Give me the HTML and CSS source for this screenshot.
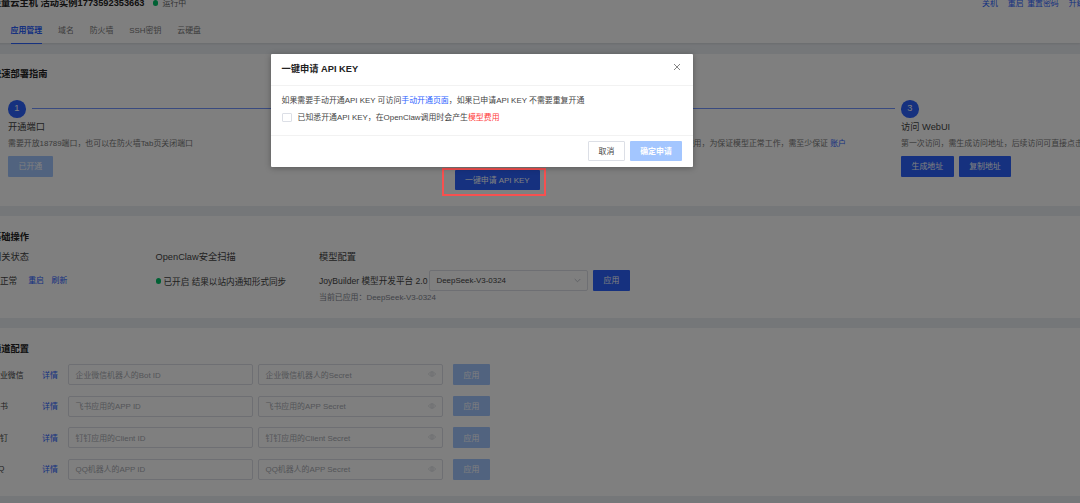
FILE: index.html
```html
<!DOCTYPE html>
<html lang="zh-CN">
<head>
	<meta charset="UTF-8">
	<title>应用管理</title>
	<link rel="stylesheet" href="styles.css">
</head>
<body>
	<div class="page">
		<div class="header">
			<div class="top">
				<h1>轻量云主机 活动实例1773592353663</h1>
				<span class="dot"></span>
				<span class="state">运行中</span>
				<div class="actions">
					<a>关机</a><a>重启</a><a>重置密码</a><a>升级配置</a>
				</div>
			</div>
			<ul class="tabs">
				<li class="on">应用管理</li>
				<li>域名</li>
				<li>防火墙</li>
				<li>SSH密钥</li>
				<li>云硬盘</li>
			</ul>
		</div>

		<div class="card guide">
			<h2>快速部署指南</h2>
			<div class="steps">
				<div class="step">
					<div class="num"><i>1</i><b></b></div>
					<h3>开通端口</h3>
					<p>需要开放18789端口，也可以在防火墙Tab页关闭端口</p>
					<div class="btns"><span class="btn disabled">已开通</span></div>
				</div>
				<div class="step">
					<div class="num"><i>2</i><b></b></div>
					<h3>配置模型</h3>
					<p class="model">一键申请后会自动开通模型服务并配置到当前的实例中，开通后即可使用，为保证模型正常工作，需至少保证 <a>账户</a><br>余额充足</p>
					<div class="btns"><span class="btn">一键申请 API KEY</span></div>
				</div>
				<div class="step">
					<div class="num"><i>3</i></div>
					<h3>访问 WebUI</h3>
					<p>第一次访问，需生成访问地址，后续访问可直接点击复制地址</p>
					<div class="btns"><span class="btn">生成地址</span><span class="btn">复制地址</span></div>
				</div>
			</div>
		</div>

		<div class="card basic">
			<h2>基础操作</h2>
			<div class="cols">
				<div class="col">
					<h3>网关状态</h3>
					<div class="line">正常<a class="first">重启</a><a>刷新</a></div>
				</div>
				<div class="col">
					<h3>OpenClaw安全扫描</h3>
					<div class="line scan"><span class="dot"></span>已开启 结果以站内通知形式同步</div>
				</div>
				<div class="col">
					<h3>模型配置</h3>
					<div class="line">
						<span class="platform">JoyBuilder 模型开发平台 2.0</span>
						<div class="select">DeepSeek-V3-0324
							<svg width="7" height="5" viewBox="0 0 7 5"><path d="M.7 1l2.8 2.8L6.3 1" fill="none" stroke="#b4b8c0" stroke-width=".8"/></svg>
						</div>
						<span class="btn">应用</span>
					</div>
					<div class="tip">当前已应用：DeepSeek-V3-0324</div>
				</div>
			</div>
		</div>

		<div class="card channel">
			<h2>通道配置</h2>
			<div class="row">
				<label>企业微信</label><a>详情</a>
				<div class="input">企业微信机器人的Bot ID</div>
				<div class="input">企业微信机器人的Secret<svg class="eye" viewBox="0 0 8 6"><path d="M.4 3Q4-1.8 7.6 3 4 7.8.4 3z"/><circle cx="4" cy="3" r="1.3"/></svg></div>
				<span class="btn disabled">应用</span>
			</div>
			<div class="row">
				<label>飞书</label><a>详情</a>
				<div class="input">飞书应用的APP ID</div>
				<div class="input">飞书应用的APP Secret<svg class="eye" viewBox="0 0 8 6"><path d="M.4 3Q4-1.8 7.6 3 4 7.8.4 3z"/><circle cx="4" cy="3" r="1.3"/></svg></div>
				<span class="btn disabled">应用</span>
			</div>
			<div class="row">
				<label>钉钉</label><a>详情</a>
				<div class="input">钉钉应用的Client ID</div>
				<div class="input">钉钉应用的Client Secret<svg class="eye" viewBox="0 0 8 6"><path d="M.4 3Q4-1.8 7.6 3 4 7.8.4 3z"/><circle cx="4" cy="3" r="1.3"/></svg></div>
				<span class="btn disabled">应用</span>
			</div>
			<div class="row">
				<label>QQ</label><a>详情</a>
				<div class="input">QQ机器人的APP ID</div>
				<div class="input">QQ机器人的APP Secret<svg class="eye" viewBox="0 0 8 6"><path d="M.4 3Q4-1.8 7.6 3 4 7.8.4 3z"/><circle cx="4" cy="3" r="1.3"/></svg></div>
				<span class="btn disabled">应用</span>
			</div>
		</div>
	</div>

	<div class="mask"></div>
	<div class="mark"></div>
	<div class="dialog">
		<div class="dialog-head">
			<h2>一键申请 API KEY</h2>
			<svg width="8" height="8" viewBox="0 0 8 8"><path d="M1 1l6 6M7 1L1 7" stroke="#666" stroke-width=".8"/></svg>
		</div>
		<div class="dialog-body">
			<p>如果需要手动开通API KEY 可访问<a>手动开通页面</a>，如果已申请API KEY 不需要重复开通</p>
			<p class="agree"><span class="check"></span>已知悉开通API KEY，在OpenClaw调用时会产生<em>模型费用</em></p>
		</div>
		<div class="dialog-foot">
			<span class="btn plain">取消</span>
			<span class="btn confirm">确定申请</span>
		</div>
	</div>
</body>
</html>
```

FILE: styles.css
```css
*{
	margin: 0;
	padding: 0;
	box-sizing: border-box;
}
body{
	height: 503px;
	overflow: hidden;
	background-color: #ebeef3;
	font-family: "Liberation Sans", "Noto Sans CJK SC", sans-serif;
	font-size: 7.92px;
	color: #444;
	white-space: nowrap;
}
a{
	color: #2c62ff;
}
ul{
	list-style: none;
}
h1,h2{
	font-size: 9.25px;
	line-height: 14px;
	color: #222;
}
h3{
	font-size: 9.25px;
	font-weight: normal;
	line-height: 14px;
}
.page{
	margin-left: -18px;
	width: 1098px;
	overflow: hidden;
}
.dot{
	width: 5.5px;
	height: 5.5px;
	border-radius: 50%;
	background-color: #00c268;
}
.btn{
	display: flex;
	align-items: center;
	justify-content: center;
	height: 20.5px;
	padding: 0 10.5px 1px;
	border-radius: 1px;
	background-color: #2c62ff;
	color: #fff;
}
.disabled{
	background-color: #a3c6ff;
}

/* 顶部 */
.header{
	display: flow-root;
	height: 43px;
	background-color: #fff;
	box-shadow: 0 1px 2px rgba(0,0,0,.1);
}
.top{
	display: flex;
	align-items: center;
	height: 14px;
	margin-top: -4px;
	padding-left: 10px;
}
.top h1{
	display: flex;
	justify-content: flex-end;
	width: 152.5px;
	margin-right: 8px;
	white-space: pre;
}
.state{
	margin-left: 4.5px;
	margin-top: -1px;
	color: #666;
}
.actions{
	display: flex;
	margin-left: auto;
	margin-top: -1px;
	width: 98px;
}
.actions a{
	flex: none;
	margin-right: 10px;
}
.actions a:nth-child(2){
	margin-right: 3.5px;
}
.tabs{
	display: flex;
	gap: 15.9px;
	margin-top: 8px;
	padding-left: 28.5px;
}
.tabs li{
	height: 25.5px;
	line-height: 25px;
	color: #777;
}
.tabs .on{
	color: #2c62ff;
	font-weight: bold;
	border-bottom: 1px solid #2c62ff;
}

/* 卡片 */
.card{
	margin-top: 10.5px;
	padding: 13.5px 10px 0;
	background-color: #fff;
}
.guide{
	height: 152px;
}
.steps{
	display: flex;
	margin-top: 19px;
	padding-left: 16px;
}
.step{
	flex: none;
	width: 446.5px;
}
.num{
	display: flex;
	align-items: center;
	gap: 6px;
	height: 18px;
}
.num i{
	width: 17.5px;
	height: 17.5px;
	border-radius: 50%;
	background-color: #2c62ff;
	color: #fff;
	font-size: 9.25px;
	font-style: normal;
	line-height: 17.5px;
	text-align: center;
}
.num b{
	flex: 1;
	height: 1px;
	margin-right: 6.5px;
	margin-top: -1px;
	background-color: #7395ff;
}
.step h3{
	margin-top: 2px;
}
.step p{
	margin-top: 3px;
	color: #777;
	line-height: 13.5px;
}
.step .model{
	margin-left: -6px;
}
.btns{
	display: flex;
	gap: 5px;
	margin-top: 5.5px;
}
.basic{
	height: 101.5px;
}
.cols{
	display: flex;
	margin-top: 6.5px;
}
.col{
	flex: none;
	width: 163.5px;
}
.line{
	display: flex;
	align-items: center;
	height: 20.5px;
	margin-top: 6px;
	font-size: 8.6px;
}
.line a{
	margin-left: 7.5px;
	font-size: 7.92px;
}
.line .first{
	margin-left: 11px;
}
.col:first-child .line{
	padding-left: 8px;
	padding-bottom: 1px;
}
.scan{
	padding-top: 1px;
}
.scan .dot{
	margin-right: 2.5px;
}
.platform{
	flex: none;
	width: 110px;
}
.select,.input{
	display: flex;
	flex: none;
	align-items: center;
	justify-content: space-between;
	height: 21px;
	padding: 0 6.5px 1px;
	border: 1px solid #dcdfe6;
	border-radius: 2px;
}
.select{
	width: 159px;
	padding-bottom: 0;
	font-size: 7.92px;
}
.line .btn{
	flex: none;
	margin-left: 5px;
	font-size: 7.92px;
}
.tip{
	margin-top: 1.5px;
	line-height: 12px;
	color: #82868f;
}
.channel{
	height: 168px;
}
.channel h2{
	margin-bottom: 8.5px;
}
.row{
	display: flex;
	align-items: center;
	height: 21px;
	margin-bottom: 10.6px;
}
.row label{
	width: 50px;
	padding-bottom: 1px;
}
.row a{
	width: 26px;
	padding-bottom: 1px;
}
.input{
	width: 185px;
	margin-right: 5px;
	color: #a8abb2;
}
.row .btn{
	margin-left: 5px;
}
.eye{
	width: 8px;
	height: 6px;
	fill: none;
	stroke: #c8ccd4;
	stroke-width: .6;
}

/* 弹窗 */
.mask{
	position: absolute;
	top: 0;
	left: 0;
	width: 100%;
	height: 503px;
	background-color: rgba(0,0,0,.5);
}
.mark{
	position: absolute;
	left: 441.5px;
	top: 168px;
	width: 104px;
	height: 28px;
	border: 2px solid #f7504f;
}
.dialog{
	position: absolute;
	left: 271px;
	top: 53.5px;
	width: 421.5px;
	height: 113px;
	border-radius: 1px;
	background-color: #fff;
	box-shadow: 0 1px 6px rgba(0,0,0,.3);
}
.dialog-head{
	display: flex;
	align-items: center;
	justify-content: space-between;
	height: 32px;
	padding: 0 12px 0 10.5px;
	border-bottom: 1px solid #f2f2f2;
}
.dialog-head svg{
	margin-top: -4px;
}
.dialog-body{
	height: 50px;
	padding: 8.5px 10.5px 0;
	border-bottom: 1px solid #f2f2f2;
}
.dialog-body p{
	line-height: 13px;
}
.dialog-body .agree{
	display: flex;
	align-items: center;
	margin-top: 4px;
}
.check{
	width: 10px;
	height: 9px;
	margin-right: 6px;
	border: 1px solid #dcdfe6;
	border-radius: 1px;
}
.agree em{
	color: #ff3b3b;
	font-style: normal;
}
.dialog-foot{
	display: flex;
	justify-content: flex-end;
	gap: 5px;
	padding: 5px 10.5px 0;
}
.dialog-foot .btn{
	width: 52px;
	padding: 0 0 1px;
}
.dialog-foot .plain{
	width: 37px;
	border: 1px solid #dcdfe6;
	background-color: #fff;
	color: #444;
}
.dialog-foot .confirm{
	background-color: #a3c6ff;
	font-weight: bold;
}
```
